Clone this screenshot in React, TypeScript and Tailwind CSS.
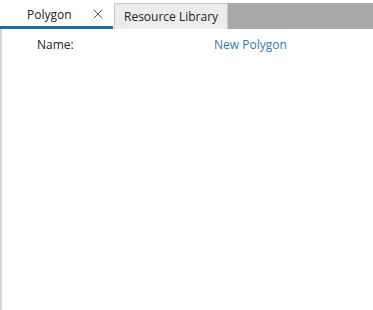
import { X } from "lucide-react";

export default function App() {
  return (
    <div
      className="flex h-[310px] w-[373px] flex-col bg-white text-[12px] text-[#222]"
      style={{ fontFamily: '"Open Sans", "Noto Sans", sans-serif' }}
    >
      <div className="flex h-[29px] shrink-0 items-end">
        <div className="flex h-[29px] w-[113px] items-center border-b-[3px] border-[#1f6aa5] bg-white pl-[27px] pr-[7px]">
          <span className="flex-1 pt-[3px]">Polygon</span>
          <X size={16} strokeWidth={1.4} className="mt-[1px] text-[#444]" />
        </div>
        <div className="ml-px flex h-[26px] w-[114px] items-center border border-b-0 border-[#c8c8c8] bg-[#ececec] pl-[9px]">
          Resource Library
        </div>
        <div className="h-[26px] flex-1 bg-[#a8a8a8]" />
      </div>
      <div className="flex-1 border-l-2 border-[#d4d4d4]">
        <div className="flex pt-[7px]">
          <span className="w-[212px] pl-[35px]">Name:</span>
          <span className="text-[#2f7ab9]">New Polygon</span>
        </div>
      </div>
    </div>
  );
}
